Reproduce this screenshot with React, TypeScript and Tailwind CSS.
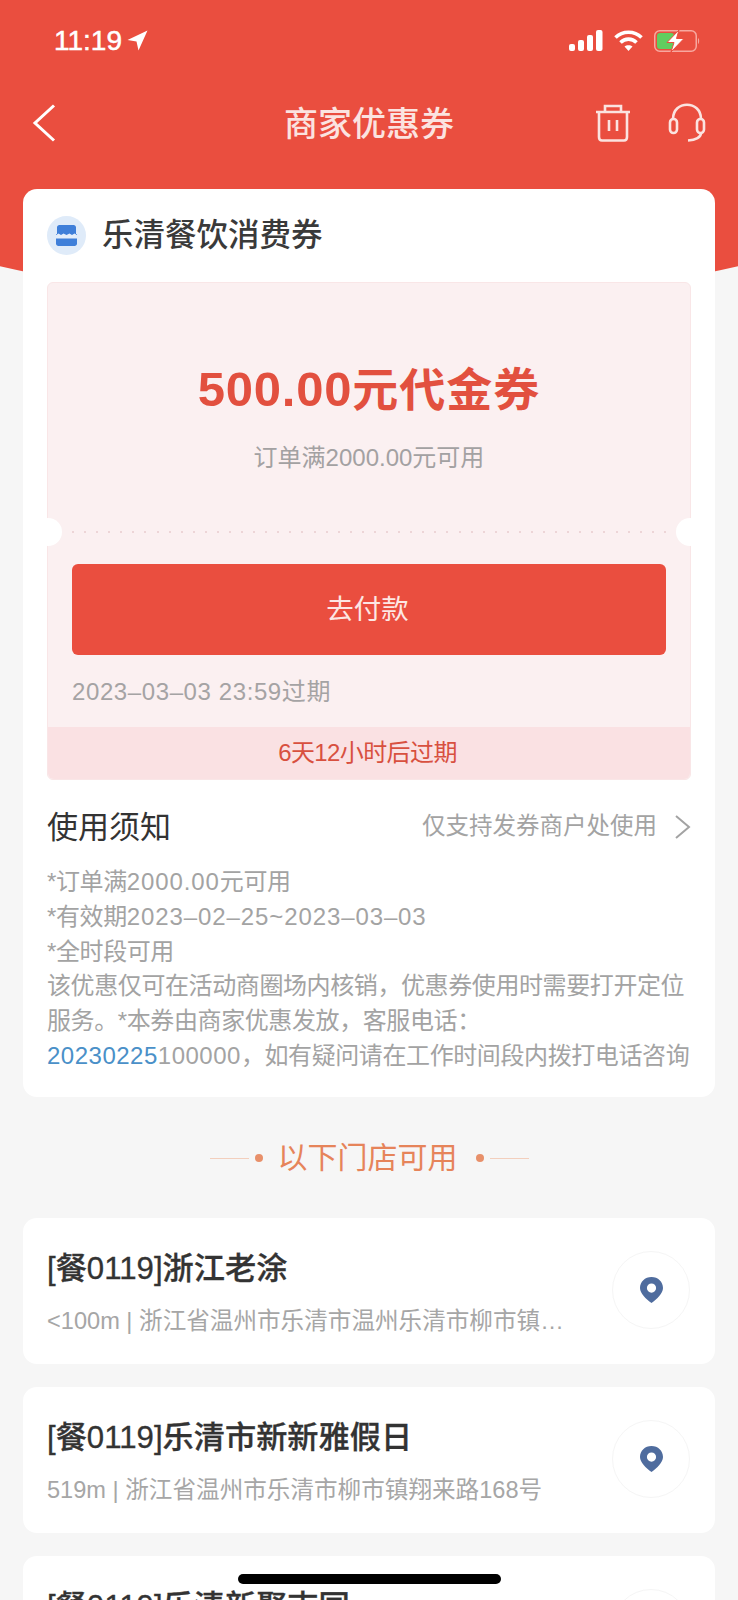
const font = "font-['Liberation_Sans','Noto_Sans_CJK_SC',sans-serif]";

function StatusBar() {
  return (
    <div className="flex h-[80px] items-center justify-between pl-[54px] pr-[38px] pt-[1px] text-white">
      <div className="flex items-center gap-[5px]">
        <span className="text-[28px] font-medium leading-none [-webkit-text-stroke:0.5px_white]">11:19</span>
        <svg width="21" height="21" viewBox="0 0 21 21" fill="white">
          <path d="M20.5 0.5 L0.5 10 L9.5 11.5 L11.5 20.5 Z" />
        </svg>
      </div>
      <div className="flex items-center gap-[11px]">
        <svg width="34" height="21" viewBox="0 0 34 21" fill="white">
          <rect x="0" y="14" width="6" height="7" rx="2" />
          <rect x="9" y="10" width="6" height="11" rx="2" />
          <rect x="18" y="5" width="6" height="16" rx="2" />
          <rect x="27" y="0" width="6.5" height="21" rx="2" />
        </svg>
        <svg width="29" height="21" viewBox="0 0 29 21" fill="none" stroke="white" strokeWidth="3.6">
          <path d="M1.5 7.5 C8.5 0.5 20.5 0.5 27.5 7.5" />
          <path d="M6.5 12.5 C11 8 18 8 22.5 12.5" />
          <path d="M14.5 21 L10.5 16.5 C12.5 14.8 16.5 14.8 18.5 16.5 Z" fill="white" stroke="none" />
        </svg>
        <svg width="46" height="22" viewBox="0 0 46 22" fill="none">
          <rect x="0.75" y="0.75" width="41.5" height="20.5" rx="5" stroke="#f7a89f" strokeWidth="1.5" />
          <rect x="3" y="3" width="17" height="16" rx="3" fill="#62cd5f" />
          <path d="M44 8 C45.5 8.5 45.5 13.5 44 14 Z" fill="#f7a89f" />
          <path d="M25 0 L13 12.5 H20 L17 22 L30 8.5 H22.5 Z" fill="white" stroke="#ea4e3f" strokeWidth="1" />
        </svg>
      </div>
    </div>
  );
}

function NavBar() {
  return (
    <div className="grid h-[85px] grid-cols-[1fr_auto_1fr] items-center pl-[32px] pr-[32px]">
      <svg width="24" height="38" viewBox="0 0 24 38" fill="none" stroke="white" strokeWidth="3">
        <path d="M22 1.5 L3 19 L22 36.5" />
      </svg>
      <div className="pt-[2px] text-[34px] font-medium leading-none text-[#fbe3e0]">商家优惠券</div>
      <div className="flex items-center justify-end gap-[37px]">
        <svg width="36" height="38" viewBox="0 0 36 38" fill="none" stroke="#fbe3e0" strokeWidth="2.6">
          <path d="M1 8 H35" />
          <path d="M10 8 V2 H26 V8" />
          <path d="M4 8 V33 C4 35 5 36.5 7 36.5 H29 C31 36.5 32 35 32 33 V8" />
          <path d="M14 16 V27" />
          <path d="M22 16 V27" />
        </svg>
        <svg width="38" height="39" viewBox="0 0 38 39" fill="none" stroke="#fbe3e0" strokeWidth="2.6">
          <path d="M5 16 C5 -3 33 -3 33 16" />
          <rect x="2" y="16" width="7" height="14" rx="3.5" />
          <rect x="29" y="16" width="7" height="14" rx="3.5" />
          <path d="M33 30 C33 34 28 37 20 37.5" />
        </svg>
      </div>
    </div>
  );
}

function CouponTicket() {
  return (
    <div className="relative mx-[24px] rounded-[6px] border border-[#f9e6e7] bg-[#fbf0f1]">
      <div className="flex h-[248px] flex-col items-center">
        <div className="mt-[76px] text-[46px] font-bold leading-[60px] tracking-[1px] text-[#e2503f]">
          <span className="text-[49px] tracking-[0.8px]">500.00</span>元代金券
        </div>
        <div className="mt-[20px] text-[24px] leading-[36px] text-[#a3a1a2]">订单满2000.00元可用</div>
      </div>
      <div className="absolute left-[-14px] top-[235px] size-[28px] rounded-full bg-white" />
      <div className="absolute right-[-14px] top-[235px] size-[28px] rounded-full bg-white" />
      <div className="flex h-[2px] justify-between px-[24px]">
        {Array.from({ length: 50 }).map((_, i) => (
          <span key={i} className="size-[2px] rounded-full bg-[#e8cdce]" />
        ))}
      </div>
      <div className="mx-[24px] mt-[31px] flex h-[91px] items-center justify-center rounded-[6px] bg-[#ea4e3f] pr-[3px] text-[27.5px] text-[#fde7e4]">
        去付款
      </div>
      <div className="mx-[24px] mt-[19px] h-[36px] text-[24px] leading-[36px] tracking-[0.6px] text-[#a5a3a4]">2023–03–03 23:59过期</div>
      <div className="mt-[17px] flex h-[52px] items-center justify-center rounded-b-[6px] bg-[#fae1e3] pr-[3px] text-[24px] tracking-[-0.6px] text-[#d8503f]">
        6天12小时后过期
      </div>
    </div>
  );
}

function UsageNotes() {
  return (
    <div className="mx-[24px]">
      <div className="mt-[26px] flex h-[42px] items-center justify-between">
        <div className="text-[31px] leading-none text-[#333333]">使用须知</div>
        <div className="flex items-center gap-[17px]">
          <span className="text-[23.5px] leading-none text-[#a3a3a3]">仅支持发券商户处使用</span>
          <svg width="17" height="24" viewBox="0 0 17 24" fill="none" stroke="#a3a3a3" strokeWidth="2">
            <path d="M2 1 L15 12 L2 23" />
          </svg>
        </div>
      </div>
      <div className="mt-[17px] whitespace-nowrap text-[24px] leading-[34.8px] tracking-[-0.4px] text-[#a3a3a3]">
        <div>
          *订单满<span className="tracking-[0.9px]">2000.00</span>元可用
        </div>
        <div>
          *有效期<span className="tracking-[0.9px]">2023–02–25~2023–03–03</span>
        </div>
        <div>*全时段可用</div>
        <div>该优惠仅可在活动商圈场内核销，优惠券使用时需要打开定位</div>
        <div>服务。*本券由商家优惠发放，客服电话：</div>
        <div>
          <span className="tracking-[0.5px] text-[#4a90c8]">20230225</span>
          <span className="tracking-[0.5px]">100000</span>，如有疑问请在工作时间段内拨打电话咨询
        </div>
      </div>
    </div>
  );
}

function SectionLabel() {
  return (
    <div className="mt-[41px] flex h-[40px] items-center justify-center text-[30px] leading-none text-[#e6845a]">
      <span className="h-px w-[39px] bg-[#f3cfbd]" />
      <span className="ml-[6px] size-[8px] rounded-full bg-[#e8906a]" />
      <span className="ml-[15px] mr-[18px]">以下门店可用</span>
      <span className="size-[8px] rounded-full bg-[#e8906a]" />
      <span className="ml-[6px] h-px w-[39px] bg-[#f3cfbd]" />
    </div>
  );
}

function StoreCard({ name, addr }: { name: string; addr: string }) {
  return (
    <div className="mx-[23px] flex h-[146px] shrink-0 items-start justify-between rounded-[14px] bg-white pl-[24px] pr-[25px]">
      <div className="min-w-0">
        <div className="mt-[31px] text-[31.2px] font-medium leading-[40px] text-[#333333] [-webkit-text-stroke:0.3px_#333333]">{name}</div>
        <div className="mt-[15px] whitespace-nowrap text-[23.6px] leading-[34px] text-[#a6a6a6]">{addr}</div>
      </div>
      <div className="mt-[33px] flex size-[78px] shrink-0 items-center justify-center rounded-full border border-[#f5f5f5]">
        <svg width="23" height="26" viewBox="0 0 23 26" fill="none">
          <path
            fillRule="evenodd"
            d="M11.5 0 C18 0 23 4.8 23 11 C23 16.5 17 22 11.5 26 C6 22 0 16.5 0 11 C0 4.8 5 0 11.5 0 Z M11.5 6.5 A4.6 4.6 0 1 0 11.5 15.7 A4.6 4.6 0 1 0 11.5 6.5 Z"
            fill="#4f6c9e"
          />
        </svg>
      </div>
    </div>
  );
}

export default function App() {
  return (
    <div className={`relative h-[1600px] w-[738px] overflow-hidden bg-[#f6f6f6] ${font}`}>
      {/* curved red backdrop, wider than the page so only a shallow arc shows */}
      <div className="absolute left-[-231px] top-0 h-[304px] w-[1200px] rounded-b-[600px_178px] bg-[#ea4e3f]" />

      <div className="relative flex flex-col">
        <StatusBar />
        <NavBar />

        <div className="mx-[23px] mt-[24px] h-[908px] shrink-0 overflow-hidden rounded-[14px] bg-white">
          <div className="flex h-[93px] items-center gap-[16px] pl-[24px]">
            <div className="flex size-[39px] items-center justify-center rounded-full bg-[#dfebf9]">
              <svg width="21" height="21" viewBox="0 0 21 21">
                <path d="M3.5 0 H17.5 C19 0 20 1 20 2.5 V9 H21 V18.5 C21 20 20 21 18.5 21 H2.5 C1 21 0 20 0 18.5 V9 H1 V2.5 C1 1 2 0 3.5 0 Z" fill="#3f7fd9" />
                <path d="M0 10 L2.5 8.5 L5 10 L7.5 8.5 L10.5 10 L13.5 8.5 L16 10 L18.5 8.5 L21 10 V13.5 H0 Z" fill="#e3edfa" />
              </svg>
            </div>
            <div className="text-[31.5px] font-medium leading-none text-[#3a3a3a]">乐清餐饮消费券</div>
          </div>
          <CouponTicket />
          <UsageNotes />
        </div>

        <SectionLabel />

        <div className="mt-[40px] flex flex-col gap-[23px]">
          <StoreCard name="[餐0119]浙江老涂" addr="<100m | 浙江省温州市乐清市温州乐清市柳市镇…" />
          <StoreCard name="[餐0119]乐清市新新雅假日" addr="519m | 浙江省温州市乐清市柳市镇翔来路168号" />
          <StoreCard name="[餐0119]乐清新聚志园" addr="" />
        </div>
      </div>

      {/* home indicator */}
      <div className="absolute bottom-[16px] left-[238px] h-[10px] w-[263px] rounded-full bg-black" />
    </div>
  );
}
